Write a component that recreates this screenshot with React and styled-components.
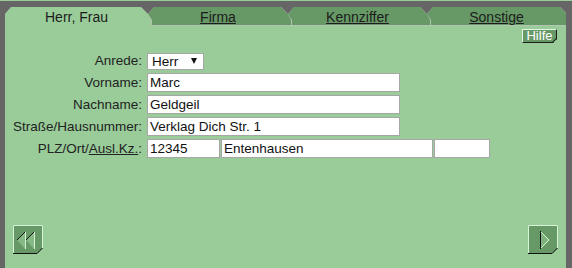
import styled, { createGlobalStyle } from "styled-components";

const GlobalStyle = createGlobalStyle`
  html,
  body {
    margin: 0;
    background: #99cc99;
    font-family: "Liberation Sans", Arial, sans-serif;
  }
`;

const Frame = styled.div`
  box-sizing: border-box;
  margin-top: 1px;
  height: 267px;
  padding: 6px 6px 0 5px;
  background: #666666;
  display: flex;
  flex-direction: column;
`;

const TabBar = styled.nav`
  display: flex;
  flex: none;
  height: 19px;
`;

/* the outer box shows the thin light edge, ::before is the tab face */
const Tab = styled.div`
  position: relative;
  z-index: ${({ $z }) => $z};
  flex: none;
  width: ${({ $w, $last }) => ($last ? `${$w}px` : `${$w + 4}px`)};
  margin-right: ${({ $last }) => ($last ? 0 : "-4px")};
  height: 19px;
  background: #b4c4b4;
  clip-path: ${({ $last }) =>
    $last
      ? "polygon(0 7px, 6px 0, calc(100% - 6px) 0, 100% 6px, 100% 100%, 0 100%)"
      : "polygon(0 7px, 6px 0, calc(100% - 11px) 0, calc(100% - 4px) 7px, 100% 13px, 100% 100%, 0 100%)"};
  display: flex;
  justify-content: center;
  align-items: center;
  padding-right: ${({ $last }) => ($last ? 0 : "4px")};
  box-sizing: border-box;
  cursor: pointer;

  &::before {
    content: "";
    position: absolute;
    left: 0;
    top: 0;
    right: 0;
    bottom: ${({ $active }) => ($active ? 0 : "1px")};
    background: ${({ $active }) => ($active ? "#99cc99" : "#669966")};
    clip-path: ${({ $last }) =>
      $last
        ? "polygon(0 7px, 6px 0, calc(100% - 6px) 0, 100% 6px, 100% 100%, 0 100%)"
        : "polygon(0 7px, 6px 0, calc(100% - 11px) 0, calc(100% - 4px) 7px, calc(100% - 1px) 13px, calc(100% - 1px) 100%, 0 100%)"};
  }
`;

const TabLabel = styled.span`
  position: relative;
  margin-top: 1px;
  font-size: 14px;
  color: #1c1c1c;
  text-decoration: ${({ $active }) => ($active ? "none" : "underline")};
`;

const Panel = styled.main`
  flex: 1;
  background: #99cc99;
  display: flex;
  flex-direction: column;
`;

const HelpRow = styled.div`
  display: flex;
  justify-content: flex-end;
  padding: 3px 9px 0 0;
`;

const HelpButton = styled.button`
  position: relative;
  box-sizing: border-box;
  width: 35px;
  height: 14px;
  padding: 0 0 1px 0;
  background: #669966;
  color: #ffffff;
  font-family: "Liberation Sans", Arial, sans-serif;
  font-size: 13px;
  line-height: 11px;
  border: 1px solid;
  border-color: #e4f4e4 #1e1e1e #1e1e1e #e4f4e4;
  clip-path: polygon(0 0, 100% 0, 100% calc(100% - 4px), calc(100% - 4px) 100%, 0 100%);
  cursor: pointer;

  &::after {
    content: "";
    position: absolute;
    right: -2px;
    bottom: 1px;
    width: 7px;
    height: 1px;
    background: #1e1e1e;
    transform: rotate(-45deg);
  }
`;

const Form = styled.form`
  display: grid;
  grid-template-columns: 138px auto;
  grid-auto-rows: 22px;
  column-gap: 5px;
  align-items: center;
  margin: 6px 0 0 -1px;
`;

const Label = styled.label`
  justify-self: end;
  white-space: nowrap;
  font-size: 13.5px;
  color: #222222;

  a {
    color: #222222;
    text-decoration: underline;
  }
`;

const Field = styled.input`
  box-sizing: border-box;
  width: ${({ $w }) => $w}px;
  height: 19px;
  margin: 0;
  padding: 0 2px;
  border: 1px solid #a6a6a6;
  background: #ffffff;
  font-family: "Liberation Sans", Arial, sans-serif;
  font-size: 13.5px;
  color: #111111;
  outline: none;
`;

const FieldGroup = styled.div`
  display: flex;
  gap: 1px;
`;

const SelectWrap = styled.div`
  position: relative;
  width: 57px;
  height: 17px;
`;

const Select = styled.select`
  appearance: none;
  box-sizing: border-box;
  width: 100%;
  height: 100%;
  margin: 0;
  padding: 0 0 0 4px;
  border: 1px solid #a6a6a6;
  border-radius: 0;
  background: #ffffff;
  font-family: "Liberation Sans", Arial, sans-serif;
  font-size: 13.5px;
  color: #111111;
`;

const SelectArrow = styled.span`
  position: absolute;
  right: 7px;
  top: 6px;
  width: 0;
  height: 0;
  border-left: 3.5px solid transparent;
  border-right: 3.5px solid transparent;
  border-top: 6px solid #111111;
  pointer-events: none;
`;

const Footer = styled.div`
  margin-top: auto;
  display: flex;
  justify-content: space-between;
  padding: 0 8px 14px 8px;
`;

const NavButton = styled.button`
  display: block;
  width: 30px;
  height: 29px;
  padding: 0;
  border: none;
  background: none;
  cursor: pointer;

  svg {
    display: block;
  }
`;

function ButtonFace({ children }) {
  return (
    <svg width="30" height="29" viewBox="0 0 30 29">
      <path d="M0 0H30V23L24 29H0Z" fill="#669966" />
      <path d="M0.5 28.5V0.5H29.5V23" fill="none" stroke="#d8f4d8" />
      <path d="M0 28.5H24L29.5 23" fill="none" stroke="#111" />
      {children}
    </svg>
  );
}

function BackIcon() {
  return (
    <ButtonFace>
      {[4, 13].map((x) => (
        <g key={x}>
          <path d={`M${x} 15L${x + 8} 7V24Z`} fill="#86b886" />
          <path d={`M${x} 15L${x + 8} 7`} fill="none" stroke="#111" />
          <path d={`M${x + 8.5} 7V24`} fill="none" stroke="#d8f4d8" />
        </g>
      ))}
    </ButtonFace>
  );
}

function NextIcon() {
  return (
    <ButtonFace>
      <path d="M12 6L21 15L12 24Z" fill="#7fb27f" />
      <path d="M12 6L21 15L12 24" fill="none" stroke="#d8f4d8" />
      <path d="M12.5 6V24" fill="none" stroke="#111" />
    </ButtonFace>
  );
}

const tabs = [
  { label: "Herr, Frau", w: 143 },
  { label: "Firma", w: 140 },
  { label: "Kennziffer", w: 139 },
  { label: "Sonstige", w: 139 },
];

export default function App() {
  return (
    <>
      <GlobalStyle />
      <Frame>
        <TabBar>
          {tabs.map((t, i) => (
            <Tab
              key={t.label}
              $w={t.w}
              $z={10 - i}
              $active={i === 0}
              $last={i === tabs.length - 1}
            >
              <TabLabel $active={i === 0}>{t.label}</TabLabel>
            </Tab>
          ))}
        </TabBar>

        <Panel>
          <HelpRow>
            <HelpButton type="button">Hilfe</HelpButton>
          </HelpRow>

          <Form onSubmit={(e) => e.preventDefault()}>
            <Label htmlFor="anrede">Anrede:</Label>
            <SelectWrap>
              <Select id="anrede" defaultValue="Herr">
                <option>Herr</option>
                <option>Frau</option>
              </Select>
              <SelectArrow />
            </SelectWrap>

            <Label htmlFor="vorname">Vorname:</Label>
            <Field id="vorname" $w={253} defaultValue="Marc" />

            <Label htmlFor="nachname">Nachname:</Label>
            <Field id="nachname" $w={253} defaultValue="Geldgeil" />

            <Label htmlFor="strasse">Straße/Hausnummer:</Label>
            <Field id="strasse" $w={253} defaultValue="Verklag Dich Str. 1" />

            <Label htmlFor="plz">
              PLZ/Ort/<a href="#">Ausl.Kz.</a>:
            </Label>
            <FieldGroup>
              <Field id="plz" $w={73} defaultValue="12345" />
              <Field $w={212} defaultValue="Entenhausen" />
              <Field $w={56} defaultValue="" />
            </FieldGroup>
          </Form>

          <Footer>
            <NavButton type="button" aria-label="Zurück">
              <BackIcon />
            </NavButton>
            <NavButton type="button" aria-label="Weiter">
              <NextIcon />
            </NavButton>
          </Footer>
        </Panel>
      </Frame>
    </>
  );
}
